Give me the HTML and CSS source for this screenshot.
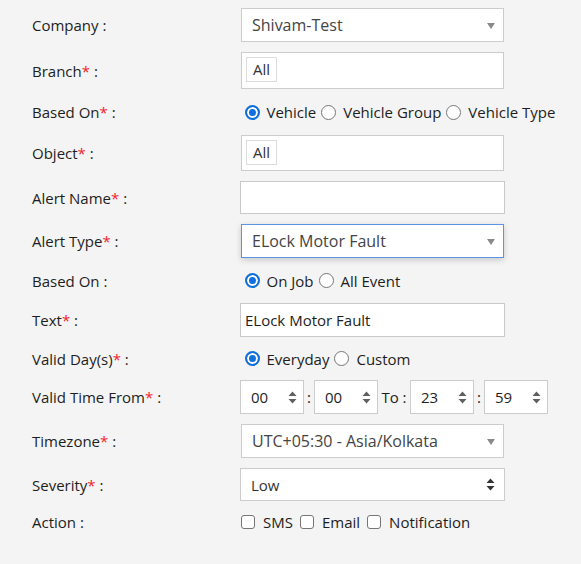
FILE: index.html
```html
<!DOCTYPE html>
<html>
<head>
<meta charset="utf-8">
<link rel="stylesheet" href="styles.css">
</head>
<body>
<form class="form">
  <div class="row r-company">
    <label class="lbl">Company :</label>
    <div class="s2 h34"><span class="s2-text">Shivam-Test</span><span class="s2-arrow"></span></div>
  </div>
  <div class="row">
    <label class="lbl">Branch<span class="req">*</span> :</label>
    <div class="multi h37"><span class="tag">All</span></div>
  </div>
  <div class="row h26">
    <label class="lbl">Based On<span class="req">*</span> :</label>
    <div class="opts">
      <span class="radio on"></span><span class="opt">Vehicle</span>
      <span class="radio"></span><span class="opt">Vehicle Group</span>
      <span class="radio"></span><span class="opt">Vehicle Type</span>
    </div>
  </div>
  <div class="row">
    <label class="lbl">Object<span class="req">*</span> :</label>
    <div class="multi h36"><span class="tag">All</span></div>
  </div>
  <div class="row">
    <label class="lbl">Alert Name<span class="req">*</span> :</label>
    <div class="inp h33"></div>
  </div>
  <div class="row">
    <label class="lbl">Alert Type<span class="req">*</span> :</label>
    <div class="s2 focus h34"><span class="s2-text">ELock Motor Fault</span><span class="s2-arrow"></span></div>
  </div>
  <div class="row h25">
    <label class="lbl">Based On :</label>
    <div class="opts">
      <span class="radio on"></span><span class="opt">On Job</span>
      <span class="radio"></span><span class="opt">All Event</span>
    </div>
  </div>
  <div class="row">
    <label class="lbl">Text<span class="req">*</span> :</label>
    <div class="inp h34"><span class="inp-text">ELock Motor Fault</span></div>
  </div>
  <div class="row h23">
    <label class="lbl">Valid Day(s)<span class="req">*</span> :</label>
    <div class="opts">
      <span class="radio on"></span><span class="opt">Everyday</span>
      <span class="radio"></span><span class="opt">Custom</span>
    </div>
  </div>
  <div class="row">
    <label class="lbl">Valid Time From<span class="req">*</span> :</label>
    <div class="times">
      <div class="spin"><span>00</span><svg class="spin-ico" width="9" height="13" viewBox="0 0 9 13"><path d="M4.5 0.5 L8.5 5 L0.5 5 Z M4.5 12.5 L8.5 8 L0.5 8 Z" fill="#5f5f5f"/></svg></div>
      <span class="sep">:</span>
      <div class="spin"><span>00</span><svg class="spin-ico" width="9" height="13" viewBox="0 0 9 13"><path d="M4.5 0.5 L8.5 5 L0.5 5 Z M4.5 12.5 L8.5 8 L0.5 8 Z" fill="#5f5f5f"/></svg></div>
      <span class="to">To :</span>
      <div class="spin"><span>23</span><svg class="spin-ico" width="9" height="13" viewBox="0 0 9 13"><path d="M4.5 0.5 L8.5 5 L0.5 5 Z M4.5 12.5 L8.5 8 L0.5 8 Z" fill="#5f5f5f"/></svg></div>
      <span class="sep">:</span>
      <div class="spin"><span>59</span><svg class="spin-ico" width="9" height="13" viewBox="0 0 9 13"><path d="M4.5 0.5 L8.5 5 L0.5 5 Z M4.5 12.5 L8.5 8 L0.5 8 Z" fill="#5f5f5f"/></svg></div>
    </div>
  </div>
  <div class="row">
    <label class="lbl">Timezone<span class="req">*</span> :</label>
    <div class="s2 h34"><span class="s2-text">UTC+05:30 - Asia/Kolkata</span><span class="s2-arrow"></span></div>
  </div>
  <div class="row">
    <label class="lbl">Severity<span class="req">*</span> :</label>
    <div class="sel h33"><span class="sel-text">Low</span><svg class="sel-ico" width="9" height="13" viewBox="0 0 9 13"><path d="M4.5 0.5 L8.5 5 L0.5 5 Z M4.5 12.5 L8.5 8 L0.5 8 Z" fill="#333"/></svg></div>
  </div>
  <div class="row h21">
    <label class="lbl">Action :</label>
    <div class="opts">
      <span class="check"></span><span class="copt">SMS</span>
      <span class="check"></span><span class="copt">Email</span>
      <span class="check"></span><span class="copt">Notification</span>
    </div>
  </div>
</form>
</body>
</html>
```

FILE: styles.css
```css
html, body {
  margin: 0;
  padding: 0;
  background: #f4f4f4;
}
body {
  font-family: "Open Sans", "Liberation Sans", sans-serif;
  font-size: 15px;
  color: #1e1e1e;
  width: 581px;
  height: 564px;
  overflow: hidden;
}
.form {
  display: flex;
  flex-direction: column;
  gap: 10px;
  padding: 8px 0 0 32px;
}
.row {
  display: flex;
  align-items: center;
}
.lbl {
  width: 208px;
  flex: none;
  line-height: 20px;
}
.req {
  color: #f5222d;
}
.h19 { height: 19px; }
.h21 { height: 21px; }
.h23 { height: 23px; }
.h24 { height: 24px; }
.h25 { height: 25px; }
.h26 { height: 26px; }
.h33 { height: 33px; }
.h34 { height: 34px; }
.h35 { height: 35px; }
.h36 { height: 36px; }
.h37 { height: 37px; }

.s2 {
  box-sizing: border-box;
  width: 263px;
  margin-left: 1px;
  background: #fff;
  border: 1px solid #cccccc;
  display: flex;
  align-items: center;
  padding-left: 10px;
  position: relative;
}
.s2.focus {
  border-color: #5c95e8;
  box-shadow: 0 2px 6px rgba(0, 0, 0, 0.18);
}
.s2-text {
  color: #444;
  font-size: 16px;
}
.s2-arrow {
  position: absolute;
  right: 8px;
  top: 50%;
  margin-top: -2px;
  width: 0;
  height: 0;
  border-left: 4px solid transparent;
  border-right: 4px solid transparent;
  border-top: 6px solid #8a8a8a;
}
.multi {
  box-sizing: border-box;
  width: 263px;
  margin-left: 1px;
  background: #fff;
  border: 1px solid #cccccc;
  padding: 4px 0 0 4px;
  display: flex;
  align-items: flex-start;
}
.tag {
  box-sizing: border-box;
  height: 25px;
  line-height: 23px;
  border: 1px solid #dcdcdc;
  padding: 0 6px 0 6px;
  color: #333;
}
.inp {
  box-sizing: border-box;
  width: 265px;
  background: #fff;
  border: 1px solid #c9c9c9;
  display: flex;
  align-items: center;
  padding-left: 4px;
}
.inp-text {
  color: #1e1e1e;
}
.opts {
  display: flex;
  align-items: center;
}
.radio {
  box-sizing: border-box;
  width: 15px;
  height: 15px;
  border-radius: 50%;
  border: 1px solid #767676;
  background: #fff;
  margin: 0 7px 0 4.5px;
  flex: none;
}
.opt + .radio {
  margin-left: 5px;
}
.radio.on {
  border: 2px solid #0f6fdc;
  box-shadow: inset 0 0 0 2px #fff;
  background: #0f6fdc;
}
.check {
  box-sizing: border-box;
  width: 14px;
  height: 14px;
  border-radius: 3px;
  border: 1px solid #767676;
  background: #fff;
  margin: 0 8px 0 1px;
  flex: none;
}
.copt + .check {
  margin-left: 7px;
}
.times {
  display: flex;
  align-items: center;
  height: 34px;
}
.spin {
  box-sizing: border-box;
  width: 64px;
  height: 34px;
  background: #fff;
  border: 1px solid #cccccc;
  display: flex;
  align-items: center;
  justify-content: space-between;
  padding: 0 6px 0 10px;
  color: #1e1e1e;
}
.sep {
  width: 10px;
  text-align: center;
}
.to {
  width: 32px;
  text-align: center;
}
.sel {
  box-sizing: border-box;
  width: 265px;
  background: #fff;
  border: 1px solid #cccccc;
  display: flex;
  align-items: center;
  justify-content: space-between;
  padding: 0 9px 0 10px;
}
.sel-text {
  color: #333;
}
```
